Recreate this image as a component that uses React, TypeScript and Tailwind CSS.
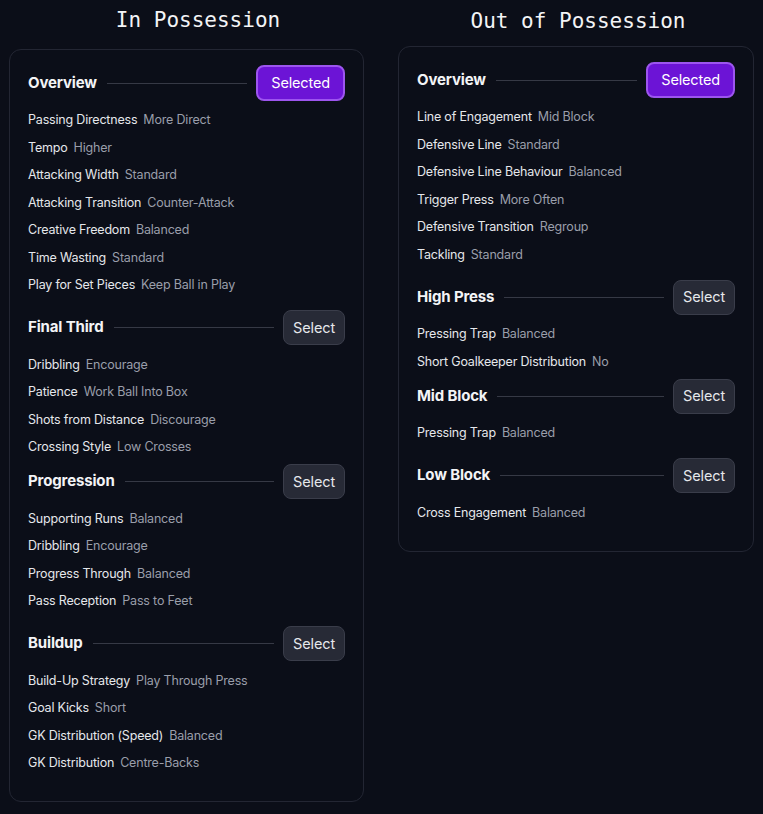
import React from "react";

interface Row {
  label: string;
  value: string;
}

interface Section {
  title: string;
  selected?: boolean;
  rows: Row[];
  gapAfter?: "wide" | "tight";
}

const inPossession: Section[] = [
  {
    title: "Overview",
    selected: true,
    rows: [
      { label: "Passing Directness", value: "More Direct" },
      { label: "Tempo", value: "Higher" },
      { label: "Attacking Width", value: "Standard" },
      { label: "Attacking Transition", value: "Counter-Attack" },
      { label: "Creative Freedom", value: "Balanced" },
      { label: "Time Wasting", value: "Standard" },
      { label: "Play for Set Pieces", value: "Keep Ball in Play" },
    ],
    gapAfter: "wide",
  },
  {
    title: "Final Third",
    rows: [
      { label: "Dribbling", value: "Encourage" },
      { label: "Patience", value: "Work Ball Into Box" },
      { label: "Shots from Distance", value: "Discourage" },
      { label: "Crossing Style", value: "Low Crosses" },
    ],
    gapAfter: "tight",
  },
  {
    title: "Progression",
    rows: [
      { label: "Supporting Runs", value: "Balanced" },
      { label: "Dribbling", value: "Encourage" },
      { label: "Progress Through", value: "Balanced" },
      { label: "Pass Reception", value: "Pass to Feet" },
    ],
    gapAfter: "wide",
  },
  {
    title: "Buildup",
    rows: [
      { label: "Build-Up Strategy", value: "Play Through Press" },
      { label: "Goal Kicks", value: "Short" },
      { label: "GK Distribution (Speed)", value: "Balanced" },
      { label: "GK Distribution", value: "Centre-Backs" },
    ],
  },
];

const outOfPossession: Section[] = [
  {
    title: "Overview",
    selected: true,
    rows: [
      { label: "Line of Engagement", value: "Mid Block" },
      { label: "Defensive Line", value: "Standard" },
      { label: "Defensive Line Behaviour", value: "Balanced" },
      { label: "Trigger Press", value: "More Often" },
      { label: "Defensive Transition", value: "Regroup" },
      { label: "Tackling", value: "Standard" },
    ],
    gapAfter: "wide",
  },
  {
    title: "High Press",
    rows: [
      { label: "Pressing Trap", value: "Balanced" },
      { label: "Short Goalkeeper Distribution", value: "No" },
    ],
    gapAfter: "tight",
  },
  {
    title: "Mid Block",
    rows: [{ label: "Pressing Trap", value: "Balanced" }],
    gapAfter: "wide",
  },
  {
    title: "Low Block",
    rows: [{ label: "Cross Engagement", value: "Balanced" }],
  },
];

const SectionBlock: React.FC<{ section: Section }> = ({ section }) => (
  <div className={section.gapAfter === "wide" ? "mb-[10px]" : section.gapAfter === "tight" ? "mb-[2px]" : ""}>
    <div className="flex items-center h-9">
      <h3 className="text-[15px] font-bold text-[#f3f4f6] tracking-[-0.01em]">{section.title}</h3>
      <div className="flex-1 h-px bg-[#363945] ml-[10px] mr-[9px]" />
      {section.selected ? (
        <button className="h-9 px-[13px] rounded-lg bg-[#6c14d6] border-2 border-[#9d55ef] text-[14.5px] text-white tracking-[-0.01em]">
          Selected
        </button>
      ) : (
        <button className="h-[35px] px-[9px] rounded-lg bg-[#272a36] border border-[#3a3d4a] text-[14.5px] text-[#e5e7eb] tracking-[-0.01em]">
          Select
        </button>
      )}
    </div>
    <div className="pt-[6px]">
      {section.rows.map((r, i) => (
        <div key={i} className="h-[27.5px] flex items-center gap-[6px] text-[12.5px] tracking-[-0.015em]">
          <span className="text-[#e5e7eb]">{r.label}</span>
          <span className="text-[#9a9eaa]">{r.value}</span>
        </div>
      ))}
    </div>
  </div>
);

const App: React.FC = () => {
  return (
    <div
      className="min-h-screen bg-[#0b0e18] px-[9px] flex gap-[34px] items-start"
      style={{ fontFamily: "Inter, 'Noto Sans', sans-serif" }}
    >
      <div className="w-[355px]">
        <h2 className="mt-[6px] pl-[23px] h-[28px] leading-[28px] text-center text-[21px] text-[#f3f4f6] font-['DejaVu_Sans_Mono',monospace]">
          In Possession
        </h2>
        <div className="mt-[15px] rounded-xl border border-[#232633] px-[18px] pt-[15px] pb-[23px]">
          {inPossession.map(s => (
            <SectionBlock key={s.title} section={s} />
          ))}
        </div>
      </div>
      <div className="w-[356px]">
        <h2 className="mt-[7px] pl-[4px] h-[28px] leading-[28px] text-center text-[21px] text-[#f3f4f6] font-['DejaVu_Sans_Mono',monospace]">
          Out of Possession
        </h2>
        <div className="mt-[11px] rounded-xl border border-[#232633] px-[18px] pt-[15px] pb-[24px]">
          {outOfPossession.map(s => (
            <SectionBlock key={s.title} section={s} />
          ))}
        </div>
      </div>
    </div>
  );
};

export default App;
